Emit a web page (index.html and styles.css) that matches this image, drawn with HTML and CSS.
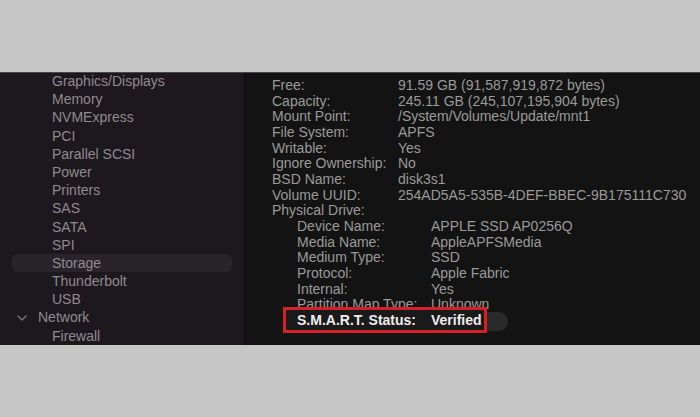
FILE: index.html
```html
<!DOCTYPE html>
<html>
<head>
<meta charset="utf-8">
<link rel="stylesheet" href="styles.css">
</head>
<body>
<div class="window">
  <nav class="sidebar">
    <div class="item">Graphics/Displays</div>
    <div class="item">Memory</div>
    <div class="item">NVMExpress</div>
    <div class="item">PCI</div>
    <div class="item">Parallel SCSI</div>
    <div class="item">Power</div>
    <div class="item">Printers</div>
    <div class="item">SAS</div>
    <div class="item">SATA</div>
    <div class="item">SPI</div>
    <div class="item selected">Storage</div>
    <div class="item">Thunderbolt</div>
    <div class="item">USB</div>
    <div class="group"><svg class="chev" width="10" height="6" viewBox="0 0 10 6"><path d="M1 1 L5 5 L9 1" fill="none" stroke="#7a747a" stroke-width="1.4" stroke-linecap="round" stroke-linejoin="round"/></svg>Network</div>
    <div class="item">Firewall</div>
  </nav>
  <main class="detail">
    <div class="row"><span>Free:</span><span>91.59 GB (91,587,919,872 bytes)</span></div>
    <div class="row"><span>Capacity:</span><span>245.11 GB (245,107,195,904 bytes)</span></div>
    <div class="row"><span>Mount Point:</span><span>/System/Volumes/Update/mnt1</span></div>
    <div class="row"><span>File System:</span><span>APFS</span></div>
    <div class="row"><span>Writable:</span><span>Yes</span></div>
    <div class="row"><span>Ignore Ownership:</span><span>No</span></div>
    <div class="row"><span>BSD Name:</span><span>disk3s1</span></div>
    <div class="row"><span>Volume UUID:</span><span>254AD5A5-535B-4DEF-BBEC-9B175111C730</span></div>
    <div class="row"><span>Physical Drive:</span><span></span></div>
    <div class="sub">
      <div class="row"><span>Device Name:</span><span>APPLE SSD AP0256Q</span></div>
      <div class="row"><span>Media Name:</span><span>AppleAPFSMedia</span></div>
      <div class="row"><span>Medium Type:</span><span>SSD</span></div>
      <div class="row"><span>Protocol:</span><span>Apple Fabric</span></div>
      <div class="row"><span>Internal:</span><span>Yes</span></div>
      <div class="row"><span>Partition Map Type:</span><span>Unknown</span></div>
      <div class="row smart"><span class="txt">S.M.A.R.T. Status:</span><span class="txt">Verified</span></div>
    </div>
  </main>
</div>
</body>
</html>
```

FILE: styles.css
```css
html, body {
  margin: 0;
  padding: 0;
  background: #c6c6c6;
  height: 417px;
  overflow: hidden;
}
body {
  font-family: "Liberation Sans", Arial, sans-serif;
  font-size: 14px;
}
.window {
  margin-top: 72px;
  height: 273px;
  display: flex;
  overflow: hidden;
  border-top: 1px solid #4a464a;
  box-sizing: border-box;
}
.sidebar {
  flex: none;
  background: #1d181d;
  border-right: 1px solid #0b0a0b;
  color: #8f8a90;
  padding: 0 12px;
  box-sizing: border-box;
  width: 245px;
  line-height: 18.2px;
  margin-top: -1px;
}
.item {
  padding-left: 40px;
  height: 18.2px;
  border-radius: 6px;
}
.item.selected {
  background: #29232a;
}
.group {
  display: flex;
  align-items: center;
  padding-left: 5px;
  height: 18.2px;
}
.chev {
  margin-right: 11px;
  margin-top: 1px;
}
.detail {
  flex: 1;
  background: #131313;
  color: #9a9a9a;
  padding: 5px 0 0 27px;
  line-height: 15.67px;
}
.row {
  display: grid;
  grid-template-columns: 126px auto;
  white-space: nowrap;
}
.sub {
  padding-left: 25px;
}
.sub .row {
  grid-template-columns: 134px auto;
}
.smart {
  position: relative;
  color: #ededed;
  font-weight: bold;
}
.smart::before {
  content: "";
  position: absolute;
  left: -14px;
  width: 225px;
  top: -1px;
  height: 19px;
  background: #2a2a2a;
  border-radius: 10px;
}
.smart::after {
  content: "";
  position: absolute;
  left: -14px;
  width: 198px;
  top: -6px;
  height: 20px;
  border: 3px solid #d81e27;
  background: #1a1a1a;
}
.smart .txt {
  position: relative;
  z-index: 1;
}
```
